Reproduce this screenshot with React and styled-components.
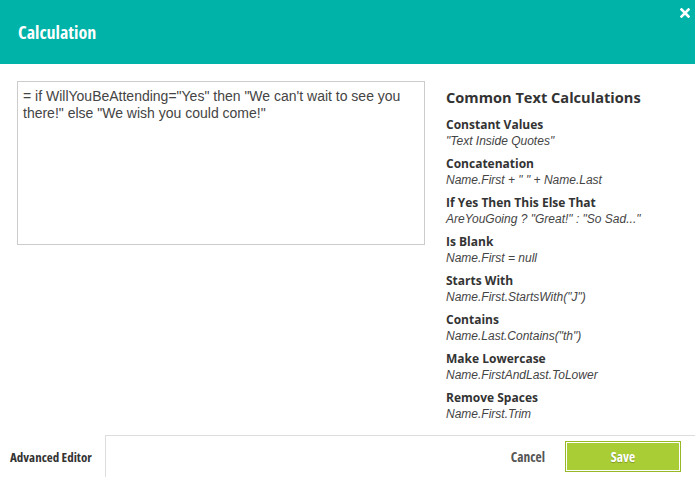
import React from "react";
import styled, { createGlobalStyle } from "styled-components";

const GlobalStyle = createGlobalStyle`
  html, body {
    margin: 0;
    padding: 0;
    background: #fff;
  }
  body {
    width: 695px;
    height: 477px;
    overflow: hidden;
    font-family: "Liberation Sans", Arial, sans-serif;
  }
`;

const condensed = `
  font-family: "Open Sans", sans-serif;
  font-stretch: 75%;
  font-weight: 700;
  white-space: nowrap;
`;

const Modal = styled.div`
  width: 695px;
  height: 477px;
  display: flex;
  flex-direction: column;
  background: #fff;
`;

const Header = styled.header`
  height: 64px;
  flex: none;
  background: #00b3a9;
  display: flex;
  justify-content: space-between;
  align-items: center;
  padding: 0 5px 0 18px;
  box-sizing: border-box;
`;

const Title = styled.h1`
  margin: 0;
  ${condensed}
  font-size: 18px;
  color: #fff;
  padding-bottom: 1px;
`;

const CloseButton = styled.button`
  align-self: flex-start;
  margin-top: 8px;
  padding: 0;
  border: none;
  background: none;
  width: 10px;
  height: 10px;
  display: flex;
  cursor: pointer;
`;

const Body = styled.div`
  flex: 1;
  display: flex;
  align-items: flex-start;
  padding: 17px 0 0 17px;
`;

const Editor = styled.textarea`
  width: 408px;
  height: 164px;
  box-sizing: border-box;
  border: 1px solid #cccccc;
  padding: 6px 5px;
  margin: 0;
  resize: none;
  outline: none;
  font-family: "Liberation Sans", Arial, sans-serif;
  font-size: 14px;
  line-height: 17px;
  color: #444;
`;

const Help = styled.aside`
  margin-left: 21px;
  padding-top: 6px;
  display: flex;
  flex-direction: column;
`;

const HelpTitle = styled.h2`
  margin: 0 0 10px;
  font-family: "Open Sans", sans-serif;
  font-weight: 700;
  font-size: 14.6px;
  line-height: 20px;
  color: #333;
`;

const Item = styled.div`
  display: flex;
  flex-direction: column;
  margin-bottom: 7px;
`;

const ItemLabel = styled.span`
  font-family: "Open Sans", sans-serif;
  font-weight: 700;
  font-size: 12px;
  line-height: 16px;
  color: #333;
`;

const ItemExample = styled.span`
  font-family: "Liberation Sans", Arial, sans-serif;
  font-style: italic;
  font-size: 12px;
  line-height: 16px;
  color: #444;
`;

const Footer = styled.footer`
  height: 42px;
  flex: none;
  display: flex;
`;

const AdvancedLink = styled.a`
  width: 105px;
  flex: none;
  display: flex;
  align-items: center;
  padding: 2px 0 0 10px;
  box-sizing: border-box;
  ${condensed}
  font-size: 13px;
  color: #333;
  text-decoration: none;
  cursor: pointer;
`;

const Actions = styled.div`
  flex: 1;
  display: flex;
  align-items: center;
  justify-content: flex-end;
  gap: 20px;
  padding-right: 14px;
  border-top: 1px solid #dddddd;
  border-left: 1px solid #dddddd;
`;

const CancelButton = styled.button`
  border: none;
  background: none;
  padding: 0;
  ${condensed}
  font-size: 13.5px;
  color: #555;
  cursor: pointer;
`;

const SaveButton = styled.button`
  width: 116px;
  height: 31px;
  border: 1px solid #98b927;
  box-shadow: inset 0 0 0 1px #fff;
  background: #a9cd35;
  ${condensed}
  font-size: 13.5px;
  color: #fff;
  text-shadow: 0 1px 1px rgba(0, 0, 0, 0.25);
  cursor: pointer;
`;

const examples = [
  ["Constant Values", "\"Text Inside Quotes\""],
  ["Concatenation", "Name.First + \" \" + Name.Last"],
  ["If Yes Then This Else That", "AreYouGoing ? \"Great!\" : \"So Sad...\""],
  ["Is Blank", "Name.First = null"],
  ["Starts With", "Name.First.StartsWith(\"J\")"],
  ["Contains", "Name.Last.Contains(\"th\")"],
  ["Make Lowercase", "Name.FirstAndLast.ToLower"],
  ["Remove Spaces", "Name.First.Trim"],
];

const CloseIcon = () => (
  <svg width="10" height="10" viewBox="0 0 10 10">
    <path d="M1.5 1.5 L8.5 8.5 M8.5 1.5 L1.5 8.5" stroke="#fff" strokeWidth="2.6" strokeLinecap="square" />
  </svg>
);

const App = () => {
  return (
    <Modal>
      <GlobalStyle />
      <Header>
        <Title>Calculation</Title>
        <CloseButton aria-label="Close">
          <CloseIcon />
        </CloseButton>
      </Header>
      <Body>
        <Editor
          defaultValue={'= if WillYouBeAttending="Yes" then "We can\'t wait to see you there!" else "We wish you could come!"'}
          spellCheck={false}
        />
        <Help>
          <HelpTitle>Common Text Calculations</HelpTitle>
          {examples.map(([label, example]) => (
            <Item key={label}>
              <ItemLabel>{label}</ItemLabel>
              <ItemExample>{example}</ItemExample>
            </Item>
          ))}
        </Help>
      </Body>
      <Footer>
        <AdvancedLink>Advanced Editor</AdvancedLink>
        <Actions>
          <CancelButton>Cancel</CancelButton>
          <SaveButton>Save</SaveButton>
        </Actions>
      </Footer>
    </Modal>
  );
};

export default App;
